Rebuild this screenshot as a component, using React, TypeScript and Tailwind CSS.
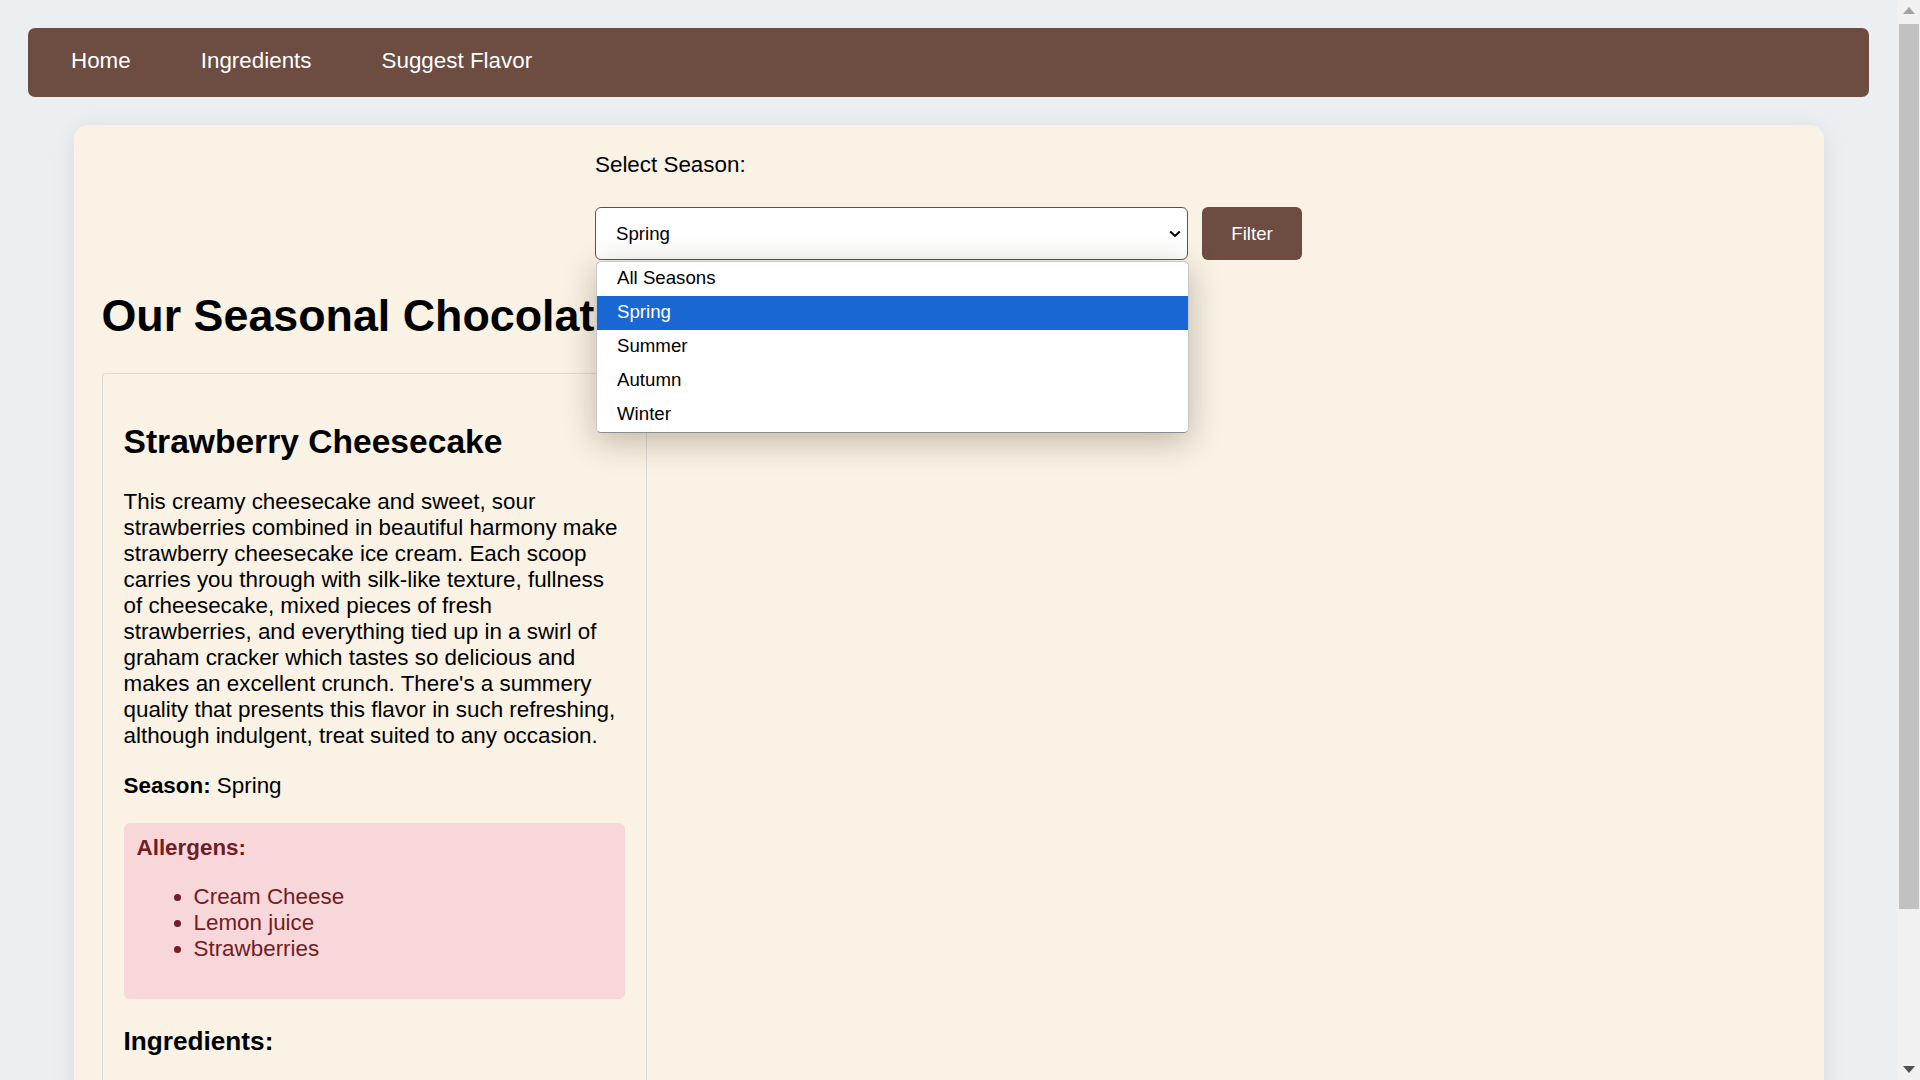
import React from "react";

const options = ["All Seasons", "Spring", "Summer", "Autumn", "Winter"];

function Scrollbar() {
  return (
    <div className="flex h-full w-[23px] shrink-0 flex-col bg-[#f1f1f1]">
      <div className="flex h-[21px] items-center justify-center">
        <svg width="12" height="7" viewBox="0 0 12 7">
          <polygon points="6,0 12,7 0,7" fill="#a3a3a3" />
        </svg>
      </div>
      <div className="ml-[2px] mr-[1px] mt-[3px] h-[885px] bg-[#c1c1c1]" />
      <div className="flex-1" />
      <div className="flex h-[21px] items-center justify-center">
        <svg width="12" height="7" viewBox="0 0 12 7">
          <polygon points="0,0 12,0 6,7" fill="#505050" />
        </svg>
      </div>
    </div>
  );
}

export default function App() {
  return (
    <div className="flex h-screen w-full overflow-hidden bg-[#eceff1] font-['Liberation_Sans',Arial,sans-serif] text-black">
      <div className="min-w-0 flex-1 overflow-hidden">
        <nav className="mx-[28px] mt-[28px] flex h-[69px] items-center gap-[70px] rounded-[7px] bg-[#6d4c41] pb-[4px] pl-[43px] text-[22.4px] leading-[26px] text-white">
          <a>Home</a>
          <a>Ingredients</a>
          <a>Suggest Flavor</a>
        </nav>

        <main className="mx-auto mt-[28px] w-[1750px] rounded-[14px] bg-[#f9f2e5] px-[28px] pb-[40px] pt-[27px] shadow-[0_4px_24px_rgba(0,0,0,0.08)]">
          <div className="flex justify-center">
            <div>
              <label className="block text-[22.4px] leading-[26px]">Select Season:</label>
              <div className="mt-[29px] flex gap-[14px]">
                <div className="relative">
                  <div className="flex h-[53px] w-[593px] items-center justify-between rounded-[6px] border border-[#6d4c41] bg-white pl-[20px] pr-[6px] text-[18.67px] leading-[22px]">
                    <span>Spring</span>
                    <svg width="12" height="8" viewBox="0 0 12 8">
                      <path d="M1.2 1.5 L6 6 L10.8 1.5" fill="none" stroke="#000" strokeWidth="2" />
                    </svg>
                  </div>
                  <div className="absolute left-[1px] top-[54px] z-10 w-[593px] overflow-hidden rounded-[5px] border border-[#c9c9c9] border-b-[#8c8c8c] bg-white text-[18.67px] leading-[22px] shadow-[0_8px_32px_rgba(60,40,20,0.3)]">
                    {options.map((o) => (
                      <div
                        key={o}
                        className={
                          o === "Spring"
                            ? "flex h-[34px] items-center bg-[#1967d2] pb-[2px] pl-[20px] text-white"
                            : "flex h-[34px] items-center pb-[2px] pl-[20px] text-black"
                        }
                      >
                        {o}
                      </div>
                    ))}
                  </div>
                </div>
                <button className="h-[53px] w-[100px] rounded-[6px] bg-[#6d4c41] text-[18.67px] leading-[22px] text-white">
                  Filter
                </button>
              </div>
            </div>
          </div>

          <h1 className="mt-[30px] text-[44.8px] font-bold leading-[51.5px]">Our Seasonal Chocolate Flavors</h1>

          <div className="mt-[31px] w-[545px] rounded-[4px] border border-[#dcdad5] px-[21px] pb-[22px] pt-[22px]">
            <h2 className="mt-[27px] text-[33.6px] font-bold leading-[38.6px]">Strawberry Cheesecake</h2>
            <p className="mt-[27.5px] text-[22.4px] leading-[26px]">
              This creamy cheesecake and sweet, sour strawberries combined in beautiful harmony make strawberry
              cheesecake ice cream. Each scoop carries you through with silk-like texture, fullness of cheesecake,
              mixed pieces of fresh strawberries, and everything tied up in a swirl of graham cracker which tastes so
              delicious and makes an excellent crunch. There's a summery quality that presents this flavor in such
              refreshing, although indulgent, treat suited to any occasion.
            </p>
            <p className="mt-[24px] text-[22.4px] leading-[26px]">
              <strong className="font-bold">Season:</strong> Spring
            </p>
            <div className="mt-[24px] rounded-[6px] bg-[#f8d7da] px-[13px] pb-[37px] pt-[12px] text-[#721c24]">
              <h4 className="text-[22.4px] font-bold leading-[26px]">Allergens:</h4>
              <ul className="mt-[23px] list-disc pl-[57px] text-[22.4px] leading-[26px]">
                <li>Cream Cheese</li>
                <li>Lemon juice</li>
                <li>Strawberries</li>
              </ul>
            </div>
            <h3 className="mt-[27px] text-[26.2px] font-bold leading-[30px]">Ingredients:</h3>
            <ul className="mt-[26px] list-disc pl-[56px] text-[22.4px] leading-[26px]">
              <li>Cream cheese</li>
              <li>Heavy cream</li>
              <li>Sugar</li>
              <li>Strawberries</li>
              <li>Graham crackers</li>
            </ul>
          </div>
        </main>
      </div>
      <Scrollbar />
    </div>
  );
}
